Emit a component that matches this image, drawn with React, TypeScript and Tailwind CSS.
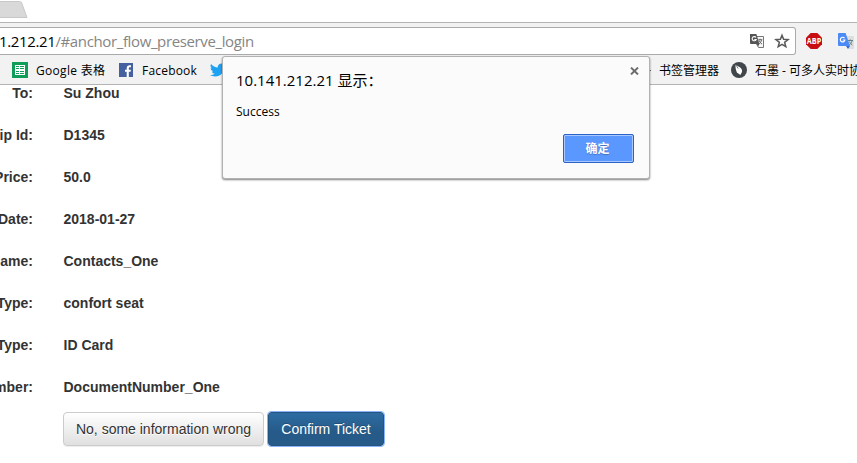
import React from "react";

const ui = "font-['Open_Sans','Noto_Sans_CJK_SC',sans-serif]";

const rows = [
  ["To:", "Su Zhou"],
  ["ip Id:", "D1345"],
  ["Price:", "50.0"],
  ["Date:", "2018-01-27"],
  ["ame:", "Contacts_One"],
  ["Type:", "confort seat"],
  ["Type:", "ID Card"],
  ["mber:", "DocumentNumber_One"],
];

function SheetsIcon() {
  return (
    <svg className="shrink-0" width="16" height="16" viewBox="0 0 16 16" shapeRendering="crispEdges">
      <rect width="16" height="16" fill="#0f9d58" />
      <rect x="3" y="3" width="10" height="10" fill="#fff" />
      <path d="M4 4h3v1H4zM8 4h4v1H8zM4 6h3v1H4zM8 6h4v1H8zM4 9h3v1H4zM8 9h4v1H8zM4 11h3v1H4zM8 11h4v1H8z" fill="#0f9d58" />
    </svg>
  );
}

function FacebookIcon() {
  return (
    <svg className="shrink-0" width="14" height="14" viewBox="0 0 14 14">
      <rect width="14" height="14" fill="#4460a0" />
      <path d="M7.7 14V8.8H6V6.7h1.7V5.2c0-1.9 1.1-2.9 2.8-2.9.8 0 1.5.1 1.5.1v1.8h-1c-.9 0-1.2.5-1.2 1.2v1.3h2.1l-.3 2.1H9.8V14z" fill="#fff" />
    </svg>
  );
}

function TwitterIcon() {
  return (
    <svg className="shrink-0" width="16" height="16" viewBox="0 0 24 24" fill="#1da1f2">
      <path d="M23.95 4.57a10 10 0 0 1-2.82.77 4.96 4.96 0 0 0 2.16-2.72c-.95.55-2 .95-3.13 1.18a4.92 4.92 0 0 0-8.38 4.48A13.9 13.9 0 0 1 1.64 3.16a4.9 4.9 0 0 0 1.52 6.57 4.9 4.9 0 0 1-2.23-.61v.06a4.92 4.92 0 0 0 3.95 4.83 5 5 0 0 1-2.21.08 4.94 4.94 0 0 0 4.6 3.42A9.87 9.87 0 0 1 0 19.54a13.99 13.99 0 0 0 7.55 2.21c9.05 0 14-7.5 14-13.98 0-.21 0-.42-.02-.63a9.94 9.94 0 0 0 2.46-2.55z" />
    </svg>
  );
}

function TranslateIcon() {
  return (
    <svg className="shrink-0" width="14" height="14" viewBox="0 0 14 14">
      <path d="M6 2.5h7.5v11H8.5L6.5 10" fill="#f7f7f7" stroke="#777" />
      <path d="M0 0h6.4l3 10H1a1 1 0 0 1-1-1z" fill="#555" />
      <path d="M6 3.5A2.1 2.1 0 1 0 6.2 5.5H4.3" fill="none" stroke="#fff" strokeWidth="1.1" />
      <path d="M8.3 5.7h4M10 4.7v1M11.5 6c-.4 2-1.4 3.2-2.6 4M9 6.3c.6 1.7 1.6 2.8 3 3.8" fill="none" stroke="#666" />
      <path d="M6.8 10h2.6l-1.3 2.4z" fill="#555" />
    </svg>
  );
}

function StarIcon() {
  return (
    <svg className="shrink-0" width="16" height="16" viewBox="0 0 16 16">
      <path d="M8 2.3l1.6 3.9 4.5.3-3.5 2.8 1.2 4.4L8 11.3l-3.8 2.4 1.2-4.4-3.5-2.8 4.5-.3z" fill="none" stroke="#5a5a5a" strokeWidth="1.5" />
    </svg>
  );
}

function AdblockIcon() {
  return (
    <svg className="shrink-0" width="16" height="16" viewBox="0 0 16 16">
      <path d="M4.7 0h6.6L16 4.7v6.6L11.3 16H4.7L0 11.3V4.7z" fill="#c70d12" />
      <text x="8" y="11" textAnchor="middle" fontFamily="Open Sans, sans-serif" fontWeight="700" fontSize="8.4" fill="#fff" textLength="14.4" lengthAdjust="spacingAndGlyphs">ABP</text>
    </svg>
  );
}

function GoogleTranslateIcon() {
  return (
    <svg className="shrink-0" width="16" height="16" viewBox="0 0 16 16">
      <path d="M7 3h8.2a.8.8 0 0 1 .8.8V15a1 1 0 0 1-1 1h-4z" fill="#dedede" />
      <path d="M10 7.5h5M12.3 6.4v1M14 8c-.5 2-1.6 3.4-3 4.3M11.3 8.5c.6 1.4 1.7 2.7 3 3.6" fill="none" stroke="#60848e" />
      <path d="M8 13h4l-2 3z" fill="#3367d6" />
      <path d="M1 0h6.6L12 13H1a1 1 0 0 1-1-1V1a1 1 0 0 1 1-1z" fill="#4c8bf5" />
      <path d="M6.5 5.2A2.3 2.3 0 1 0 6.9 7H4.7" fill="none" stroke="#fff" strokeWidth="1.2" />
    </svg>
  );
}

function ShimoIcon() {
  return (
    <svg className="shrink-0" width="16" height="16" viewBox="0 0 16 16">
      <circle cx="8" cy="8" r="8" fill="#41464b" />
      <path d="M4.6 2.8l4.6 2.6c1.9 1.4 2.3 3.3 1.5 5.1L9.3 13 6 10.4C4.6 8 4.3 5.3 4.6 2.8z" fill="#fff" />
      <path d="M5 3l2.2 3.6" stroke="#41464b" strokeWidth=".7" />
    </svg>
  );
}

export default function App() {
  return (
    <div className={`relative h-[463px] w-[857px] overflow-hidden bg-white ${ui}`}>
      <header className="flex h-[85px] flex-col">
        <div className="h-[22px]">
          <svg width="30" height="22" viewBox="0 0 30 22">
            <path d="M-1 1.5H19.5Q21 1.5 21.7 3L27 17.5H-1z" fill="#d9d9d9" stroke="#c8c8c8" />
          </svg>
        </div>
        <div className="flex h-[33px] border-t border-[#b4b4b4] bg-[#f2f2f2] pt-1">
          <div className="flex h-[28px] w-[796px] shrink-0 items-center rounded-r-[3px] border border-l-0 border-[#aaa] bg-white">
            <span className="-ml-px w-[751px] shrink-0 whitespace-nowrap text-[15px] leading-5 tracking-[-0.37px] text-[#858585]">
              <span className="text-black">1.212.21</span>/#anchor_flow_preserve_login
            </span>
            <TranslateIcon />
            <span className="ml-[10px]"><StarIcon /></span>
          </div>
          <div className="flex h-[28px] items-center gap-4 pl-[10px]">
            <AdblockIcon />
            <GoogleTranslateIcon />
          </div>
        </div>
        <div className="flex h-[30px] items-center border-b border-[#b4b4b4] bg-[#f2f2f2] pl-3 pt-px text-[12px] leading-4 text-black">
          <SheetsIcon />
          <span className="ml-2 w-[83px] shrink-0 whitespace-nowrap pt-px tracking-[0.3px]">Google 表格</span>
          <FacebookIcon />
          <span className="ml-[9px] w-[68px] shrink-0 whitespace-nowrap pt-px tracking-[0.2px]">Facebook</span>
          <TwitterIcon />
          <span className="ml-[423px] mr-2 h-px w-[2px] shrink-0 bg-[#666]" />
          <span className="w-[72px] shrink-0 whitespace-nowrap pt-px">书签管理器</span>
          <ShimoIcon />
          <span className="ml-2 shrink-0 whitespace-nowrap pt-px">石墨 - 可多人实时协</span>
        </div>
      </header>

      <main className="-mt-[13px] font-['Liberation_Sans',Arial,sans-serif] text-[14px] text-[#333]">
        <div>
          {rows.map(([label, value], i) => (
            <div key={i} className="flex h-[42px] items-center font-bold leading-5">
              <div className="flex w-[33px] shrink-0 justify-end whitespace-nowrap">{label}</div>
              <div className="ml-[30.5px]">{value}</div>
            </div>
          ))}
        </div>
        <div className="ml-[63px] mt-1 flex gap-[3px]">
          <button className="h-[34px] w-[201px] whitespace-nowrap rounded border border-[#ccc] bg-gradient-to-b from-white to-[#e0e0e0] leading-5 shadow-[0_1px_1px_rgba(0,0,0,.075)] [text-shadow:0_1px_0_#fff]">
            No, some information wrong
          </button>
          <button className="ml-px h-[34px] w-[116px] whitespace-nowrap rounded-[3px] border border-[#245580] bg-gradient-to-b from-[#2d6ca2] to-[#265a88] to-60% leading-5 text-white outline-1 outline-[#8ab4f8] [text-shadow:0_-1px_0_rgba(0,0,0,.2)]">
            Confirm Ticket
          </button>
        </div>
      </main>

      <section className="absolute left-[222px] top-[56px] flex h-[123px] w-[428px] flex-col rounded-[3px] border border-[#b2b2b2] bg-[#fbfbfb] pl-[13px] pr-[15px] text-black shadow-[0_1px_2px_rgba(0,0,0,.5)]">
        <div className="flex h-[46px] items-center justify-between">
          <h1 className="whitespace-nowrap text-[15px] leading-5">10.141.212.21 显示：</h1>
          <svg className="-mr-[5px] -mt-[18px]" width="9" height="8" viewBox="0 0 9 8">
            <path d="M1 .6l7 6.8M8 .6L1 7.4" stroke="#6c6c6c" strokeWidth="2" />
          </svg>
        </div>
        <p className="pt-px text-[12px] leading-4">Success</p>
        <button className="ml-auto mt-[14px] h-[29px] w-[71px] rounded-[2px] border border-[#2a62c8] bg-[#5a97ff] pr-[2px] text-[12px] font-bold leading-4 text-white shadow-[inset_0_0_0_1px_#a9c8ff] [text-shadow:0_1px_1px_rgba(0,0,0,.25)]">
          确定
        </button>
      </section>
    </div>
  );
}
